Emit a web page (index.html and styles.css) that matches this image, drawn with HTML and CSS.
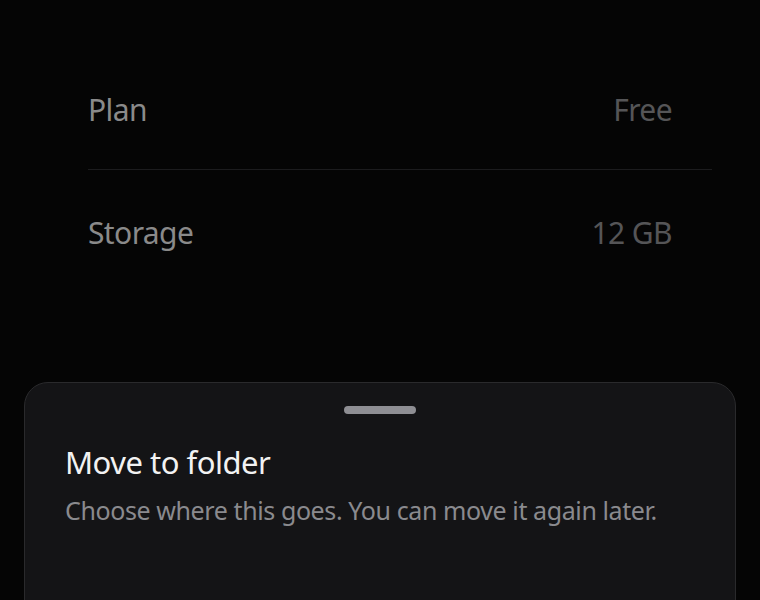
FILE: index.html
```html
<!DOCTYPE html>
<html lang="en">
<head>
<meta charset="utf-8">
<link rel="stylesheet" href="styles.css">
</head>
<body>
<main class="settings">
  <div class="row">
    <span class="label">Plan</span>
    <span class="value">Free</span>
  </div>
  <div class="row">
    <span class="label">Storage</span>
    <span class="value">12 GB</span>
  </div>
</main>
<section class="sheet">
  <div class="handle"></div>
  <h2 class="title">Move to folder</h2>
  <p class="subtitle">Choose where this goes. You can move it again later.</p>
</section>
</body>
</html>
```
FILE: styles.css
```css
html, body {
  margin: 0;
  padding: 0;
  background: #050505;
  height: 600px;
  overflow: hidden;
}
body {
  font-family: "Noto Sans", "Open Sans", sans-serif;
}
.settings {
  padding: 50px 48px 0 88px;
}
.row {
  display: flex;
  justify-content: space-between;
  align-items: center;
  height: 119px;
  padding-right: 40px;
}
.row + .row {
  border-top: 1px solid #1c1c1e;
  height: 124px;
}
.label {
  font-size: 30px;
  color: #8a8a8a;
  letter-spacing: -0.6px;
}
.value {
  font-size: 30px;
  color: #555557;
  letter-spacing: -0.6px;
}
.sheet {
  margin: 88px 24px 0;
  height: 300px;
  background: #141416;
  border: 1px solid #2a2a2c;
  border-radius: 24px;
  padding: 23px 40px 0;
  box-sizing: border-box;
}
.handle {
  width: 72px;
  height: 8px;
  border-radius: 4px;
  background: #8e8e93;
  margin: 0 auto;
}
.title {
  margin: 28px 0 0;
  font-size: 31px;
  font-weight: 400;
  color: #f2f2f2;
  letter-spacing: -0.5px;
  line-height: 40px;
}
.subtitle {
  margin: 12px 0 0;
  font-size: 25px;
  color: #8a8a8e;
  letter-spacing: -0.4px;
  line-height: 32px;
}
```
